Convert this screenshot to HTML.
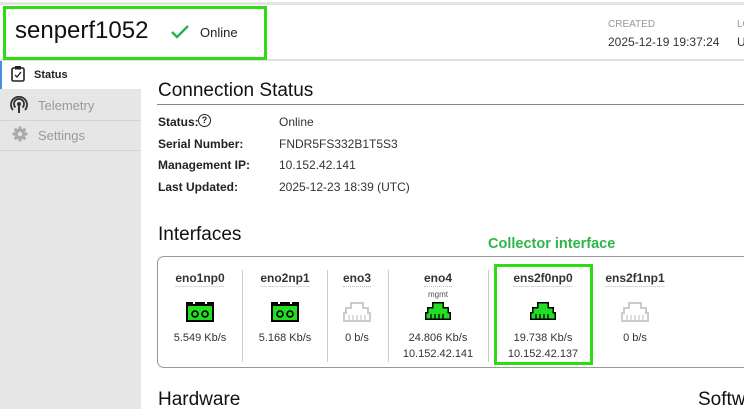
<!DOCTYPE html><html><head><style>
*{margin:0;padding:0;box-sizing:border-box}
body{width:744px;height:409px;overflow:hidden;background:#fff;font-family:"Liberation Sans",sans-serif;color:#222;position:relative}
.a{position:absolute;white-space:nowrap}
.lbl{font-weight:bold;font-size:12px}
.val{font-size:12px;color:#333}
.nm{font-weight:bold;font-size:12px;border-bottom:1px dotted #bbb;padding-bottom:1px}
.c{position:absolute;text-align:center;transform:translateX(-50%);white-space:nowrap;font-size:11px;color:#333}
.sep{position:absolute;top:270px;width:1px;height:92px;background:#ccc}
</style></head><body>
<div class="a" style="left:0;top:2px;width:744px;height:3px;background:#e4e4e4"></div>
<div class="a" style="left:0;top:59px;width:744px;height:2px;background:#e0e0e0"></div>
<div class="a" style="left:3px;top:6px;width:264px;height:54px;border:3px solid #2ddc12"></div>
<div class="a" style="left:15px;top:17px;font-size:24px;color:#111">senperf1052</div>
<svg class="a" style="left:170px;top:24px" width="20" height="16" viewBox="0 0 20 16"><path d="M2 8 L7 13 L18 2" fill="none" stroke="#1db84a" stroke-width="2.4"/></svg>
<div class="a" style="left:200px;top:25px;font-size:13px">Online</div>
<div class="a" style="left:608px;top:19px;font-size:10px;color:#999">CREATED</div>
<div class="a" style="left:608px;top:35px;font-size:12px;color:#333">2025-12-19 19:37:24</div>
<div class="a" style="left:737px;top:19px;font-size:10px;color:#999">LO</div>
<div class="a" style="left:737px;top:35px;font-size:12px;color:#333">U</div>
<div class="a" style="left:0;top:89px;width:141px;height:320px;background:#e6e6e6"></div>
<div class="a" style="left:0;top:61px;width:2px;height:28px;background:#4a8ee0"></div>
<div class="a" style="left:0;top:120px;width:141px;height:1px;background:#d4d4d4"></div>
<div class="a" style="left:0;top:150px;width:141px;height:1px;background:#d4d4d4"></div>
<svg class="a" style="left:11px;top:65px" width="14" height="17" viewBox="0 0 14 17"><rect x="1" y="3" width="12" height="13" rx="1.5" fill="none" stroke="#222" stroke-width="1.6"/><rect x="4" y="1" width="6" height="3.5" fill="#222"/><path d="M4 10 L6 12 L10 7" fill="none" stroke="#222" stroke-width="1.4"/></svg>
<div class="a" style="left:34px;top:69px;font-size:11px;font-weight:bold">Status</div>
<svg class="a" style="left:10px;top:96px" width="18" height="18" viewBox="0 0 18 18"><circle cx="9" cy="8" r="2" fill="#333"/><rect x="8" y="9" width="2" height="8" fill="#333"/><path d="M5.5 11.5A5 5 0 1 1 12.5 11.5M3 14A8 8 0 1 1 15 14" fill="none" stroke="#333" stroke-width="1.8"/></svg>
<div class="a" style="left:38px;top:98px;font-size:13px;color:#999">Telemetry</div>
<svg class="a" style="left:12px;top:126px" width="16" height="16" viewBox="0 0 16 16"><circle cx="8" cy="8" r="5.5" fill="#aaa"/><g stroke="#aaa" stroke-width="3"><path d="M8 0.5V15.5M0.5 8H15.5M2.7 2.7L13.3 13.3M13.3 2.7L2.7 13.3"/></g><circle cx="8" cy="8" r="2.2" fill="#e6e6e6"/></svg>
<div class="a" style="left:38px;top:128px;font-size:13px;color:#999">Settings</div>
<div class="a" style="left:158px;top:80px;font-size:19px;color:#111">Connection Status</div>
<div class="a" style="left:157px;top:104px;width:587px;height:1px;background:#888"></div>
<div class="a lbl" style="left:158px;top:115px">Status:</div>
<div class="a" style="left:198px;top:114px;width:13px;height:13px;border:1.3px solid #222;border-radius:50%;font-size:9px;font-weight:bold;text-align:center;line-height:11px">?</div>
<div class="a lbl" style="left:158px;top:137px">Serial Number:</div>
<div class="a lbl" style="left:158px;top:158px">Management IP:</div>
<div class="a lbl" style="left:158px;top:180px">Last Updated:</div>
<div class="a val" style="left:279px;top:115px">Online</div>
<div class="a val" style="left:279px;top:137px">FNDR5FS332B1T5S3</div>
<div class="a val" style="left:279px;top:158px">10.152.42.141</div>
<div class="a val" style="left:279px;top:180px">2025-12-23 18:39 (UTC)</div>
<div class="a" style="left:158px;top:224px;font-size:19px;color:#111">Interfaces</div>
<div class="a" style="left:488px;top:236px;font-size:14.5px;font-weight:bold;color:#2cb64a">Collector interface</div>
<div class="a" style="left:157px;top:256px;width:600px;height:112px;border:1px solid #999;border-radius:7px"></div>
<div class="sep" style="left:242px"></div><div class="sep" style="left:327px"></div><div class="sep" style="left:388px"></div><div class="sep" style="left:488px"></div>
<div class="a" style="left:494px;top:264px;width:99px;height:101px;border:3px solid #2ddc12"></div>
<svg width="0" height="0" style="position:absolute"><defs>
<g id="sfp"><rect x="1" y="3" width="26" height="16" fill="#22dd22" stroke="#000" stroke-width="2"/><rect x="9" y="0" width="10" height="4" fill="#000"/><rect x="0" y="0" width="7" height="4" fill="#000"/><rect x="21" y="0" width="7" height="4" fill="#000"/><circle cx="9" cy="12" r="3" fill="none" stroke="#000" stroke-width="1.6"/><circle cx="19" cy="12" r="3" fill="none" stroke="#000" stroke-width="1.6"/></g>
<g id="rjo"><path d="M8 1H20V6H25V11H27V19H1V11H3V6H8Z" fill="none" stroke="#ccc" stroke-width="2"/><path d="M6 13V18M10 13V18M14 13V18M18 13V18M22 13V18" stroke="#ccc" stroke-width="1.3"/></g>
</defs></svg>
<div class="c" style="left:200px;top:271px"><span class="nm">eno1np0</span></div>
<svg class="a" style="left:186px;top:302px" width="28" height="20"><use href="#sfp"/></svg>
<div class="c" style="left:200px;top:332px">5.549 Kb/s</div>
<div class="c" style="left:285px;top:271px"><span class="nm">eno2np1</span></div>
<svg class="a" style="left:271px;top:302px" width="28" height="20"><use href="#sfp"/></svg>
<div class="c" style="left:285px;top:332px">5.168 Kb/s</div>
<div class="c" style="left:357px;top:271px"><span class="nm">eno3</span></div>
<svg class="a" style="left:343px;top:302px" width="28" height="20"><use href="#rjo"/></svg>
<div class="c" style="left:357px;top:332px">0 b/s</div>
<div class="c" style="left:438px;top:271px"><span class="nm">eno4</span></div>
<div class="c" style="left:438px;top:290px;font-size:8px;color:#555">mgmt</div>
<svg class="a" style="left:424px;top:301px" width="28" height="20"><path d="M8 1H20V6H25V11H27V19H1V11H3V6H8Z" fill="#000"/><path d="M9.5 2.5H18.5V7.5H23.5V12.5H25.5V17.5H2.5V12.5H4.5V7.5H9.5Z" fill="#22dd22"/><path d="M7 13V18M11 13V18M15 13V18M19 13V18" stroke="#000" stroke-width="1.3"/></svg>
<div class="c" style="left:438px;top:332px">24.806 Kb/s</div>
<div class="c" style="left:438px;top:348px">10.152.42.141</div>
<div class="c" style="left:543px;top:271px"><span class="nm">ens2f0np0</span></div>
<svg class="a" style="left:529px;top:301px" width="28" height="20"><path d="M8 1H20V6H25V11H27V19H1V11H3V6H8Z" fill="#000"/><path d="M9.5 2.5H18.5V7.5H23.5V12.5H25.5V17.5H2.5V12.5H4.5V7.5H9.5Z" fill="#22dd22"/><path d="M7 13V18M11 13V18M15 13V18M19 13V18" stroke="#000" stroke-width="1.3"/></svg>
<div class="c" style="left:543px;top:332px">19.738 Kb/s</div>
<div class="c" style="left:543px;top:348px">10.152.42.137</div>
<div class="c" style="left:635px;top:271px"><span class="nm">ens2f1np1</span></div>
<svg class="a" style="left:621px;top:302px" width="28" height="20"><use href="#rjo"/></svg>
<div class="c" style="left:635px;top:332px">0 b/s</div>
<div class="a" style="left:158px;top:389px;font-size:19px;color:#111">Hardware</div>
<div class="a" style="left:698px;top:389px;font-size:19px;color:#111">Software</div>
</body></html>
